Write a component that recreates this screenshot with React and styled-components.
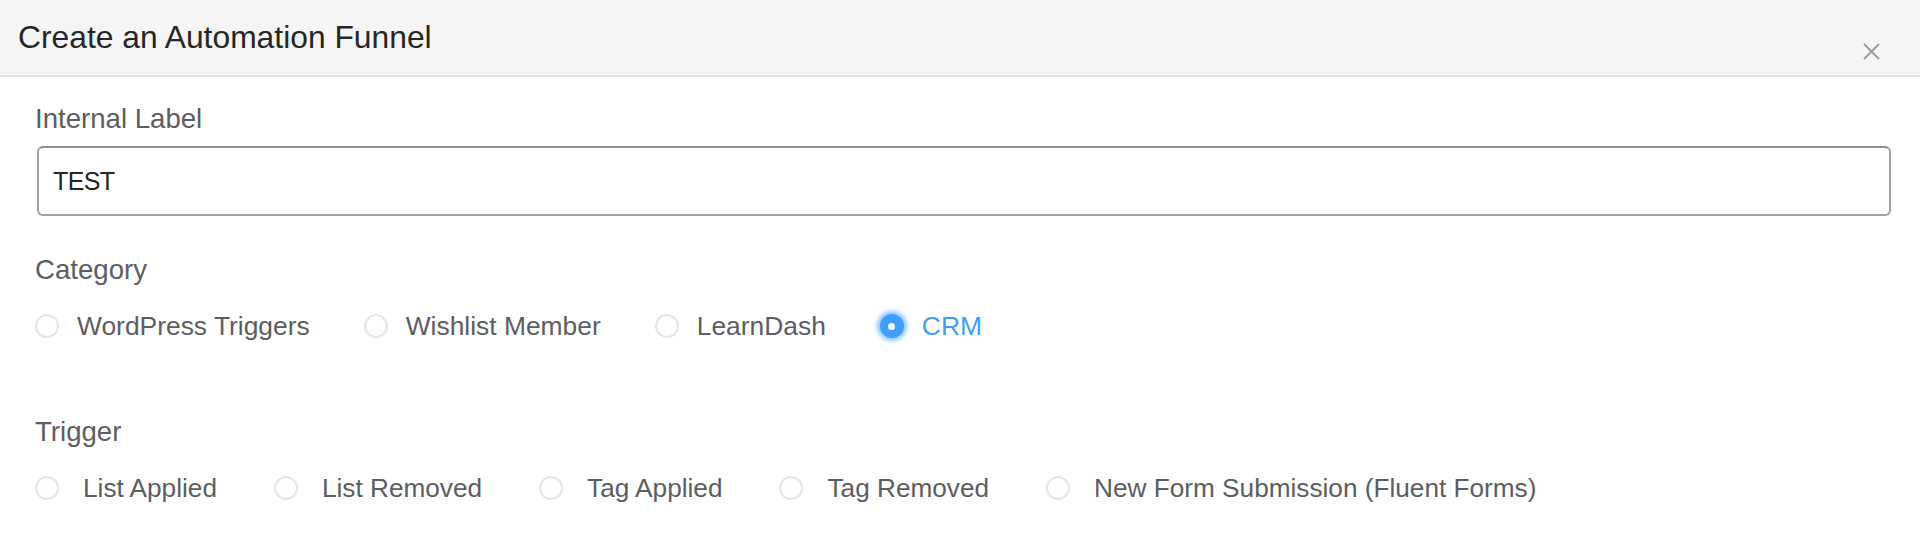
import React from 'react'
import styled, { createGlobalStyle } from 'styled-components'

const Global = createGlobalStyle`
    html, body {
        margin: 0;
        padding: 0;
        background: #ffffff;
    }
    body {
        font-family: "Liberation Sans", Arial, Helvetica, sans-serif;
    }
`

const Dialog = styled.div`
    width: 1920px;
    min-height: 560px;
    background: #ffffff;
`

const Header = styled.header`
    box-sizing: border-box;
    height: 77px;
    display: flex;
    justify-content: space-between;
    align-items: flex-start;
    padding: 17px 40px 0 18px;
    background: #f5f5f5;
    border-bottom: 2px solid #e3e3e3;
`

const Title = styled.h2`
    margin: 0;
    font-size: 31.8px;
    line-height: 40px;
    font-weight: 400;
    color: #262626;
`

const Close = styled.button`
    width: 17px;
    height: 17px;
    margin-top: 26px;
    padding: 0;
    border: none;
    background: none;
    display: flex;
    cursor: pointer;
`

const Body = styled.div`
    padding: 0 29px 0 35px;
    display: flex;
    flex-direction: column;
`

const Label = styled.label`
    display: block;
    font-size: 27.6px;
    line-height: 34px;
    color: #5c5e62;
    margin-top: ${(p) => p.$top}px;
`

const Input = styled.div`
    box-sizing: border-box;
    height: 70px;
    margin: 10px 0 0 2px;
    padding: 0 14px;
    display: flex;
    align-items: center;
    border: 2px solid #a3a3a3;
    border-top-color: #8f8f8f;
    border-radius: 6px;
    font-size: 25px;
    letter-spacing: -0.6px;
    color: #262626;
`

const RadioGroup = styled.div`
    display: flex;
    align-items: center;
    height: 34px;
    margin-top: 22px;
`

const Radio = styled.label`
    display: flex;
    align-items: center;
    gap: ${(p) => p.$gap}px;
    margin-right: ${(p) => p.$space}px;
    font-size: ${(p) => p.$size}px;
    color: ${(p) => (p.$checked ? '#409eff' : '#5c5e62')};
    cursor: pointer;
`

const Dot = styled.span`
    box-sizing: border-box;
    width: 24px;
    height: 24px;
    border-radius: 50%;
    flex-shrink: 0;
    display: flex;
    align-items: center;
    justify-content: center;
    border: ${(p) => (p.$checked ? '2px solid #409eff' : '2px solid #e4e6ea')};
    background: ${(p) => (p.$checked ? '#409eff' : '#ffffff')};
    box-shadow: ${(p) => (p.$checked ? '0 0 4px 3px rgba(64, 158, 255, 0.6)' : 'none')};

    &::after {
        content: '';
        width: 7px;
        height: 7px;
        border-radius: 50%;
        background: #ffffff;
        display: ${(p) => (p.$checked ? 'block' : 'none')};
    }
`

const categories = ['WordPress Triggers', 'Wishlist Member', 'LearnDash', 'CRM']
const triggers = ['List Applied', 'List Removed', 'Tag Applied', 'Tag Removed', 'New Form Submission (Fluent Forms)']

const Options = ({ items, selected, gap, space, size }) => (
    <RadioGroup>
        {items.map((item) => (
            <Radio key={item} $gap={gap} $space={space} $size={size} $checked={item === selected}>
                <Dot $checked={item === selected} />
                {item}
            </Radio>
        ))}
    </RadioGroup>
)

export default function App() {
    return (
        <Dialog>
            <Global />
            <Header>
                <Title>Create an Automation Funnel</Title>
                <Close aria-label="Close">
                    <svg width="17" height="17" viewBox="0 0 17 17">
                        <path d="M1 1 L16 16 M16 1 L1 16" stroke="#9a9a9a" strokeWidth="1.8" fill="none" />
                    </svg>
                </Close>
            </Header>
            <Body>
                <Label $top={25}>Internal Label</Label>
                <Input>TEST</Input>
                <Label $top={37}>Category</Label>
                <Options items={categories} selected="CRM" gap={18} space={54} size={26.4} />
                <Label $top={72}>Trigger</Label>
                <Options items={triggers} selected={null} gap={24} space={57} size={26.2} />
            </Body>
        </Dialog>
    )
}
